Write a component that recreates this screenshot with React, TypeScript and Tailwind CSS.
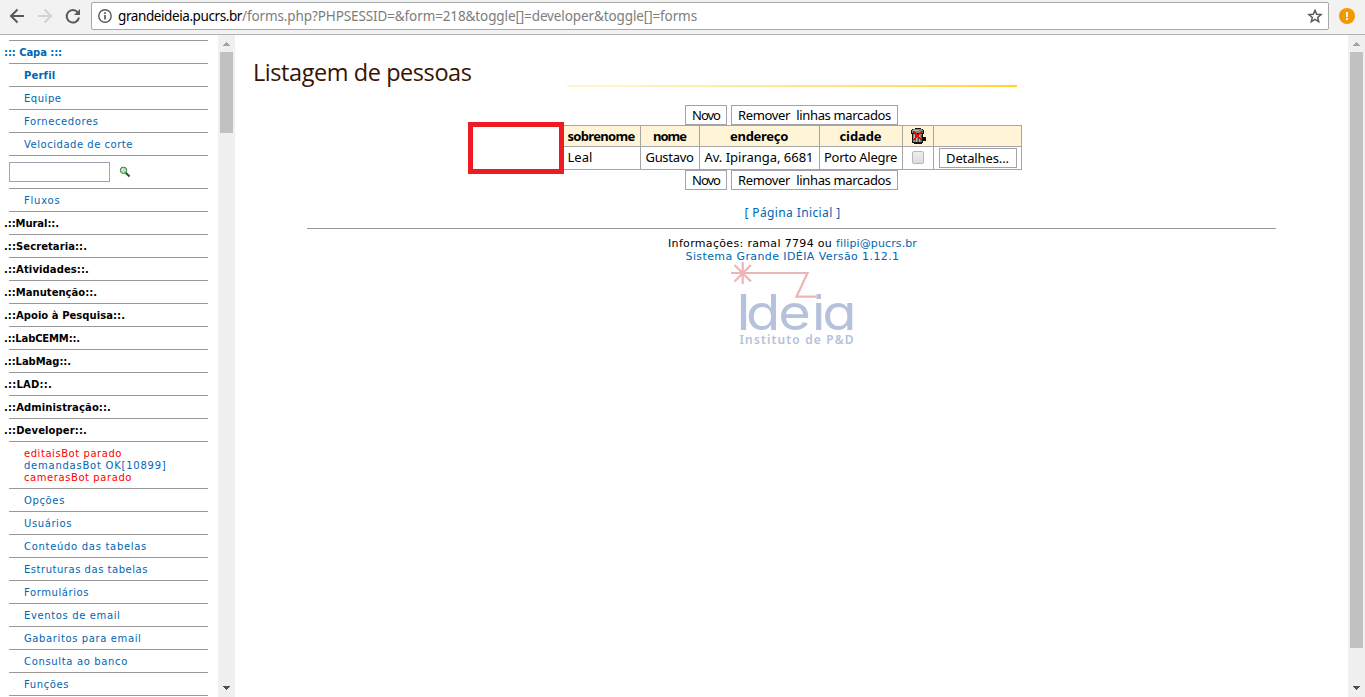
import React, { useLayoutEffect, useRef, useState } from "react";

/* Text set to a given width by spreading the difference over its letters. */
function Fit({ w, children, className = "" }: { w: number; children: string; className?: string }) {
  const ref = useRef<HTMLSpanElement>(null);
  const [spacing, setSpacing] = useState(0);
  useLayoutEffect(() => {
    const el = ref.current;
    if (!el) return;
    el.style.letterSpacing = "0px";
    const natural = el.getBoundingClientRect().width;
    const next = (w - natural) / children.length;
    el.style.letterSpacing = `${next}px`;
    setSpacing(next);
  }, [w, children]);
  return (
    <span ref={ref} className={`inline-block whitespace-pre ${className}`} style={{ letterSpacing: spacing }}>
      {children}
    </span>
  );
}

function Arrow({ down = false, dark = false }: { down?: boolean; dark?: boolean }) {
  return (
    <svg width="17" height="17" viewBox="0 0 17 17" shapeRendering="crispEdges" className={dark ? "fill-[#505050]" : "fill-[#a3a3a3]"}>
      {down ? <path d="M5 6h7v1h-1v1h-1v1h-1v1h-1v-1h-1v-1h-1v-1h-1z" /> : <path d="M8 7h1v1h1v1h1v1h1v1H5v-1h1v-1h1v-1h1z" />}
    </svg>
  );
}

function Scrollbar({ thumb }: { thumb: string }) {
  return (
    <div className="flex w-[17px] shrink-0 flex-col items-center bg-[#f0f0f0]">
      <Arrow />
      <div className={`w-[13px] bg-[#c1c1c1] ${thumb}`} />
      <div className="flex-1" />
      <Arrow down dark />
    </div>
  );
}

function Toolbar() {
  return (
    <header className="flex h-[35px] shrink-0 items-start border-b border-[#b2b2b2] bg-[#f2f2f2]">
      <svg width="91" height="34" viewBox="0 0 91 34" fill="none" strokeWidth="2">
        <path d="M24 16H11.500M17.500 9.500L11 16l6.500 6.500" stroke="#5a5a5a" />
        <path d="M38 16h12.500M44.500 9.500L51 16l-6.500 6.500" stroke="#d3d3d3" />
        <path d="M77.800 12.500A6.200 6.200 0 1 0 79 17.500" stroke="#5a5a5a" />
        <path d="M80 9v6h-6z" fill="#5a5a5a" />
      </svg>
      <div className="mt-[2px] flex h-[28px] w-[1238px] items-center rounded-[2px] border border-[#a9a9a9] bg-white pl-[5px] pr-[5px]">
        <svg width="16" height="16" viewBox="0 0 16 16" fill="none">
          <circle cx="8" cy="8" r="6.200" stroke="#5a5a5a" strokeWidth="1.400" />
          <path d="M8 7v4.500M8 4.300v1.700" stroke="#5a5a5a" strokeWidth="1.700" />
        </svg>
        <div className="ml-[5px] flex flex-1 font-['Noto_Sans',sans-serif] text-[13.500px] leading-[26px]">
          <Fit w={124} className="text-black">grandeideia.pucrs.br</Fit>
          <Fit w={455} className="text-[#7d7d7d]">/forms.php?PHPSESSID=&form=218&toggle[]=developer&toggle[]=forms</Fit>
        </div>
        <svg width="16" height="16" viewBox="0 0 16 16" fill="none" stroke="#5a5a5a" strokeWidth="1.500">
          <path d="M8 2.300l1.700 4 4.300.3-3.300 2.800 1 4.200L8 11.400l-3.700 2.200 1-4.200L2 6.600l4.300-.3z" />
        </svg>
      </div>
      <svg width="16" height="16" viewBox="0 0 16 16" className="ml-[10px] mt-[8px]">
        <circle cx="8" cy="8" r="8" fill="#f29900" />
        <path d="M7 4h2v5H7zM7 10h2v2H7z" fill="#fff" />
      </svg>
    </header>
  );
}

type Entry = { t: string; w: number; kind?: "section" | "bold" | "top" };

const first: Entry[] = [
  { t: "::: Capa :::", w: 58, kind: "top" },
  { t: "Perfil", w: 31, kind: "bold" },
  { t: "Equipe", w: 37.5 },
  { t: "Fornecedores", w: 74.5 },
  { t: "Velocidade de corte", w: 109 },
];
const second: Entry[] = [
  { t: "Fluxos", w: 36.5 },
  { t: ".::Mural::.", w: 55, kind: "section" },
  { t: ".::Secretaria::.", w: 83, kind: "section" },
  { t: ".::Atividades::.", w: 85, kind: "section" },
  { t: ".::Manutenção::.", w: 93, kind: "section" },
  { t: ".::Apoio à Pesquisa::.", w: 121, kind: "section" },
  { t: ".::LabCEMM::.", w: 76, kind: "section" },
  { t: ".::LabMag::.", w: 67, kind: "section" },
  { t: ".::LAD::.", w: 48, kind: "section" },
  { t: ".::Administração::.", w: 107, kind: "section" },
  { t: ".::Developer::.", w: 83, kind: "section" },
];
const third: Entry[] = [
  { t: "Opções", w: 41 },
  { t: "Usuários", w: 48 },
  { t: "Conteúdo das tabelas", w: 123 },
  { t: "Estruturas das tabelas", w: 124 },
  { t: "Formulários", w: 65 },
  { t: "Eventos de email", w: 96.5 },
  { t: "Gabaritos para email", w: 117.5 },
  { t: "Consulta ao banco", w: 104 },
  { t: "Funções", w: 45 },
];

const tone = {
  top: "-ml-[5px] font-bold text-[#0066b3]",
  section: "-ml-[5px] font-bold text-black",
  bold: "ml-[15px] font-bold text-[#0066b3]",
  item: "ml-[15px] text-[#0066b3]",
};

function Rows({ items }: { items: Entry[] }) {
  return (
    <>
      {items.map((e) => (
        <div key={e.t} className="flex h-[23px] shrink-0 border-b border-[#999] leading-[23px]">
          <Fit w={e.w} className={tone[e.kind ?? "item"]}>{e.t}</Fit>
        </div>
      ))}
    </>
  );
}

function Sidebar() {
  return (
    <nav className="flex w-[218px] shrink-0 flex-col overflow-hidden pl-[9px] pr-[10px] pt-[5px] font-['DejaVu_Sans',sans-serif] text-[10px]">
      <div className="h-px shrink-0 bg-[#999]" />
      <Rows items={first} />
      <div className="flex h-[33px] shrink-0 items-start border-b border-[#999] pt-[6px]">
        <input className="h-[20px] w-[101px] border border-[#a5a2b0] bg-white" />
        <svg width="12" height="12" viewBox="0 0 12 12" className="ml-[9px] mt-[4px]">
          <path d="M6.500 6.500l4 4" stroke="#126012" strokeWidth="2" />
          <circle cx="4.500" cy="4.300" r="3.200" fill="#b5dfb5" stroke="#3f7a42" />
          <path d="M3 4.500a1.500 1.500 0 0 1 1.500-1.500" stroke="#fff" fill="none" />
        </svg>
      </div>
      <Rows items={second} />
      <div className="flex h-[47px] shrink-0 flex-col items-start border-b border-[#999] pl-[15px] pt-[6px] leading-[12px]">
        <Fit w={98} className="text-[#ff0000]">editaisBot parado</Fit>
        <Fit w={142.5} className="text-[#0066b3]">demandasBot OK[10899]</Fit>
        <Fit w={108} className="text-[#ff0000]">camerasBot parado</Fit>
      </div>
      <Rows items={third} />
    </nav>
  );
}

function Buttons() {
  return (
    <div className="flex justify-center gap-1 text-[13px] leading-[19px]">
      <button className="flex h-[20px] w-[42px] justify-center border border-[#a5a2b0] bg-white"><Fit w={28}>Novo</Fit></button>
      <button className="flex h-[20px] w-[167px] justify-center border border-[#a5a2b0] bg-white"><Fit w={153}>{"Remover  linhas marcados"}</Fit></button>
    </div>
  );
}

function Trash() {
  return (
    <svg width="17" height="16" viewBox="0 0 17 16" shapeRendering="crispEdges">
      <path d="M5 0h6v1h2v1h1v4h-1v3h3v4h-3v2h-1v1H4v-1H2V6H1V2h1V1h3z" fill="#10140f" />
      <path d="M3 1h9v1h1v3H2V2h1zM3 6h9v8H3z" fill="#7c8a7a" />
      <path d="M4 7h1v6H4zM6 7h1v7H6zM9 7h1v7H9zM3 2h6v1H3z" fill="#b3bdae" />
      <path d="M5 7h1v6H5zM8 7h1v7H8zM11 7h1v6h-1z" fill="#4a5548" />
      <path d="M3 3h2v1h1v1h1v1h2V5h1V4h1V3h2v1h-1v1h-1v1h-1v1h-1v2h1v1h1v1h1v1h-2v-1h-1v-1H9V9H7v1H6v1H5v1H3v-1h1v-1h1V9h1V7H5V6H4V5H3z" fill="#f00" />
    </svg>
  );
}

function People() {
  const head = "flex justify-center border-r border-b border-[#a6a6a6] bg-[#fff5d6] font-bold";
  const cell = "flex border-r border-b border-[#a6a6a6]";
  return (
    <div className="relative">
      <div className="grid grid-cols-[78px_59px_120px_83px_31px_88px] grid-rows-[21px_23px] border-l border-t border-[#a6a6a6] text-[13px] leading-[21px]">
        <div className={head}><Fit w={67}>sobrenome</Fit></div>
        <div className={head}><Fit w={33}>nome</Fit></div>
        <div className={head}><Fit w={58}>endereço</Fit></div>
        <div className={head}><Fit w={42}>cidade</Fit></div>
        <div className={`${head} pl-px pt-[2px]`}><Trash /></div>
        <div className={head} />
        <div className={`${cell} pl-[5px]`}><Fit w={25}>Leal</Fit></div>
        <div className={`${cell} justify-center`}><Fit w={48}>Gustavo</Fit></div>
        <div className={`${cell} justify-center`}><Fit w={109}>Av. Ipiranga, 6681</Fit></div>
        <div className={`${cell} justify-center`}><Fit w={73}>Porto Alegre</Fit></div>
        <div className={`${cell} items-start pl-[9px] pt-[4px]`}>
          <span className="h-[13px] w-[12px] rounded-[2px] border border-[#b8b8b8] bg-gradient-to-b from-[#eeeeee] to-[#dcdcdc]" />
        </div>
        <div className={`${cell} pl-[5px] pt-px`}>
          <button className="flex h-[20px] w-[78px] justify-center border border-[#a5a2b0] bg-white leading-[19px]"><Fit w={63}>Detalhes...</Fit></button>
        </div>
      </div>
      <div className="absolute -left-[94px] -top-[3px] h-[52px] w-[96px] border-[5px] border-[#ed1c24] bg-white" />
    </div>
  );
}

function Logo() {
  return (
    <svg width="126" height="86" viewBox="0 0 126 86" className="ml-[3px]">
      <g transform="scale(1.12 1)">
        <text x="5.400 14.300 43 73.300 82.300" y="69" className="fill-[#b6c1db] font-['Inter',sans-serif] text-[50px] font-normal [font-feature-settings:'cv11']">Ideia</text>
      </g>
      <path d="M82 26h12v16H82z" fill="#fff" />
      <path d="M86.500 33H91v5h-4.500zM86.500 42H91v27h-4.500z" fill="#b6c1db" />
      <path d="M1 12h76.500L66.500 35.700H86.500M12.700 1v22M4.500 4l16.500 16.500M21 4L4.500 20.500" stroke="#ecb6b6" fill="none" strokeWidth="2.200" />
      <text x="9.500" y="82.500" textLength="114" className="fill-[#b6c1db] font-['Noto_Sans',sans-serif] text-[12px] font-semibold">Instituto de P&amp;D</text>
    </svg>
  );
}

function Content() {
  return (
    <main className="flex min-w-0 flex-1 flex-col items-center font-['Noto_Sans',sans-serif] text-black">
      <div className="flex h-[50px] w-full pl-[18px] pt-[21px]">
        <h1 className="font-['Open_Sans',sans-serif] text-[23.500px] leading-[32px] text-[#381400]"><Fit w={218.5}>Listagem de pessoas</Fit></h1>
      </div>
      <div className="h-[2px] w-[450px] shrink-0 bg-gradient-to-r from-[#fff6d8] to-[#ffd42a]" />
      <div className="h-[18px]" />
      <Buttons />
      <People />
      <Buttons />
      <a className="ml-[2px] mt-[13px] text-[12px] leading-[20px] text-[#0066b3]"><Fit w={96}>[ Página Inicial ]</Fit></a>
      <div className="mt-[5px] h-px w-[969px] bg-[#999]" />
      <div className="ml-[2px] mt-[8px] flex font-['DejaVu_Sans',sans-serif] text-[11px] leading-[13px]">
        <Fit w={168}>{"Informações: ramal 7794 ou "}</Fit>
        <Fit w={81} className="text-[#0066b3]">filipi@pucrs.br</Fit>
      </div>
      <div className="ml-[2px] flex font-['DejaVu_Sans',sans-serif] text-[11px] leading-[13px] text-[#0066b3]"><Fit w={214}>Sistema Grande IDÉIA Versão 1.12.1</Fit></div>
      <div className="-mt-[2px]"><Logo /></div>
    </main>
  );
}

export default function App() {
  return (
    <div className="flex h-[697px] w-[1365px] flex-col overflow-hidden bg-white">
      <Toolbar />
      <div className="flex min-h-0 flex-1">
        <Sidebar />
        <Scrollbar thumb="h-[81px]" />
        <Content />
        <Scrollbar thumb="h-[596px]" />
      </div>
    </div>
  );
}
